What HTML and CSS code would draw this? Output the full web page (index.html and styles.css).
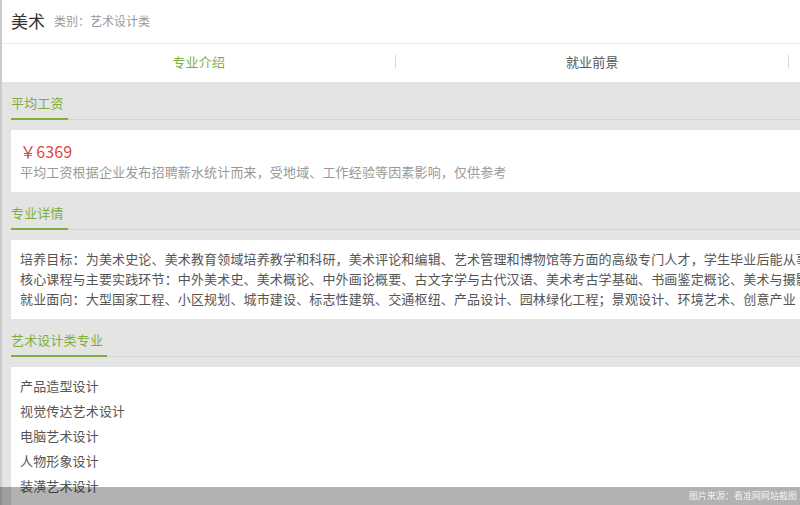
FILE: index.html
```html
<!DOCTYPE html>
<html lang="zh-CN">
<head>
    <meta charset="UTF-8">
    <meta name="viewport" content="width=device-width, initial-scale=1.0">
    <title>美术 - 专业介绍</title>
    <link rel="stylesheet" href="styles.css">
</head>
<body>
    <div class="page">
        <div class="header">
            <span class="major-name">美术</span>
            <span class="major-type">类别：艺术设计类</span>
        </div>

        <div class="tabs">
            <div class="tab active"><span>专业介绍</span></div>
            <div class="tab"><span>就业前景</span></div>
        </div>

        <div class="content">
            <div class="section-title"><span>平均工资</span></div>
            <div class="card salary">
                <div class="salary-num">￥6369</div>
                <div class="salary-note">平均工资根据企业发布招聘薪水统计而来，受地域、工作经验等因素影响，仅供参考</div>
            </div>

            <div class="section-title"><span>专业详情</span></div>
            <div class="card detail">
                <p>培养目标：为美术史论、美术教育领域培养教学和科研，美术评论和编辑、艺术管理和博物馆等方面的高级专门人才，学生毕业后能从事</p>
                <p>核心课程与主要实践环节：中外美术史、美术概论、中外画论概要、古文字学与古代汉语、美术考古学基础、书画鉴定概论、美术与摄影</p>
                <p>就业面向：大型国家工程、小区规划、城市建设、标志性建筑、交通枢纽、产品设计、园林绿化工程；景观设计、环境艺术、创意产业</p>
            </div>

            <div class="section-title"><span>艺术设计类专业</span></div>
            <ul class="card major-list">
                <li>产品造型设计</li>
                <li>视觉传达艺术设计</li>
                <li>电脑艺术设计</li>
                <li>人物形象设计</li>
                <li>装潢艺术设计</li>
            </ul>
        </div>
    </div>

    <div class="source">图片来源：看准网网站截图</div>
</body>
</html>
```

FILE: styles.css
```css
/* General */
html, body {
    height: 100%;
}

body {
    margin: 0;
    font-family: "Noto Sans CJK SC", "Liberation Sans", sans-serif;
    color: #555;
    background: #e4e4e4;
    overflow: hidden;
}

.page {
    border-left: 2px solid #cbcbcb;
    min-height: 100%;
}

/* Header */
.header {
    height: 40px;
    padding: 0 0 3px 9px;
    display: flex;
    align-items: center;
    background: #fff;
    border-bottom: 1px solid #ececec;
}

.major-name {
    font-size: 17px;
    color: #333;
    margin-right: 9px;
}

.major-type {
    font-size: 12px;
    color: #999;
}

/* Tabs */
.tabs {
    display: flex;
    height: 38px;
    background: #fff;
    padding-right: 11px;
}

.tab {
    flex: 1;
    display: flex;
    align-items: center;
    justify-content: center;
    padding-bottom: 4px;
    font-size: 13px;
    letter-spacing: 0.15px;
    color: #555;
    position: relative;
}

.tab::after {
    content: "";
    position: absolute;
    right: 0;
    top: 11px;
    height: 13px;
    border-right: 1px solid #d8d8d8;
}

.tab.active {
    color: #7fae3d; /* green accent */
}

/* Sections */
.content {
    padding-left: 9px;
}

.section-title {
    padding-top: 11px;
    border-bottom: 1px solid #d4d4d4;
    font-size: 13px;
    letter-spacing: 0.15px;
    line-height: 20px;
    color: #7fae3d;
}

.section-title span {
    display: inline-block;
    padding-right: 4px;
    padding-bottom: 5px;
    border-bottom: 2px solid #7fae3d;
    margin-bottom: -1px;
}

.card {
    background: #fff;
    margin-top: 10px;
    padding: 10px 0 10px 9px;
    overflow: hidden;
    white-space: nowrap;
    font-size: 13px;
    letter-spacing: 0.15px;
}

.salary-num {
    font-size: 16px;
    line-height: 22px;
    color: #d9483f;
}

.salary-note {
    line-height: 20px;
    color: #999;
}

.detail {
    padding-top: 9px;
}

.detail p {
    margin: 0;
    line-height: 20px;
}

.major-list {
    list-style: none;
    margin-bottom: 0;
    padding-top: 6px;
}

.major-list li {
    line-height: 25px;
}

/* Watermark bar */
.source {
    position: fixed;
    left: 0;
    right: 0;
    bottom: 0;
    height: 18px;
    line-height: 18px;
    padding-right: 3px;
    text-align: right;
    font-size: 9px;
    color: #f2f2f2;
    background: rgba(0, 0, 0, 0.3);
}
```
